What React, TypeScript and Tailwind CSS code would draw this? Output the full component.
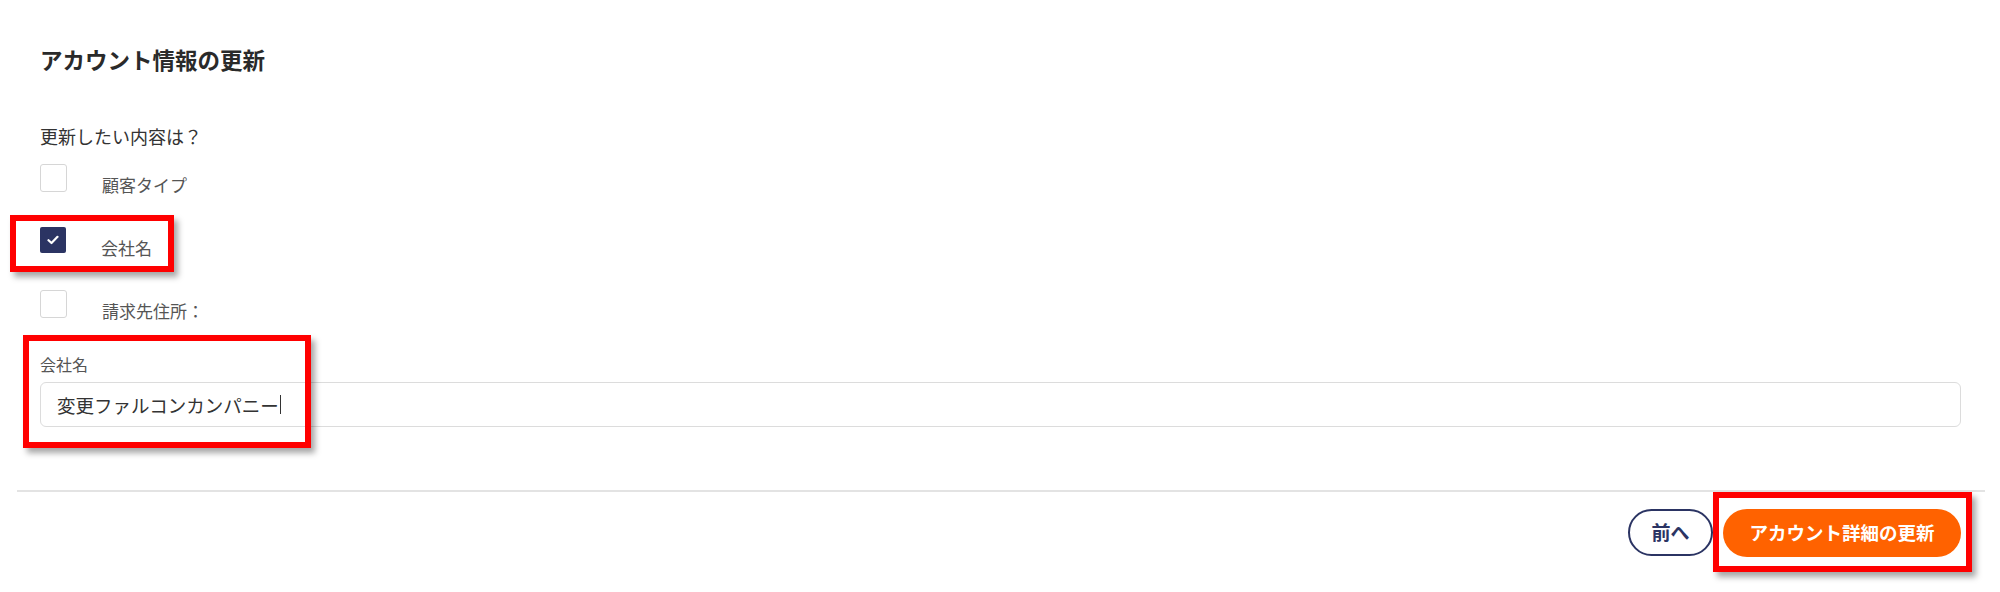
import React from 'react';

const options = [
  { label: '顧客タイプ', checked: false },
  { label: '会社名', checked: true },
  { label: '請求先住所：', checked: false },
];

// 赤枠の注釈（スクリーンショット上のマーキング）
const Marker = ({ className }: { className: string }) => (
  <div
    className={`absolute border-[6px] border-[#ff0000] shadow-[4px_5px_6px_rgba(0,0,0,0.35)] pointer-events-none ${className}`}
  />
);

const Checkbox = ({ checked }: { checked: boolean }) =>
  checked ? (
    <div className="w-[26px] h-[26px] rounded-[2px] bg-[#2b3463] flex items-center justify-center">
      <svg width="12" height="10" viewBox="0 0 12 10" fill="none">
        <path d="M1.5 5.2 4.5 8 10.5 1.8" stroke="white" strokeWidth="2.2" strokeLinecap="round" strokeLinejoin="round" />
      </svg>
    </div>
  ) : (
    <div className="w-[27px] h-[28px] rounded-[3px] border border-[#d6d6d6] bg-white" />
  );

const App: React.FC = () => {
  return (
    <div className="relative w-[2000px] h-[592px] bg-white overflow-hidden font-['Noto_Sans_CJK_JP','Noto_Sans',sans-serif] text-[#333]">
      <div className="px-[40px] pt-[44px]">
        <h1 className="text-[22.5px] leading-[30px] font-bold text-[#2a2a2a]">アカウント情報の更新</h1>

        <p className="mt-[50px] text-[18px] leading-[24px] text-[#333]">更新したい内容は？</p>

        <div className="mt-[16px] flex flex-col gap-[36px]">
          {options.map((o) => (
            <div key={o.label} className="flex items-start h-[27px]">
              <Checkbox checked={o.checked} />
              <span className="ml-[35px] mt-[9px] text-[17px] leading-[24px] text-[#555]">{o.label}</span>
            </div>
          ))}
        </div>

        <label className="block mt-[36px] text-[16px] leading-[22px] text-[#555]">会社名</label>
        <div className="mt-[7px] h-[45px] w-[1921px] border border-[#dcdcdc] rounded-[6px] flex items-center pl-[16px]">
          <span className="text-[18.5px] leading-[26px] text-[#333]">変更ファルコンカンパニー</span>
          <span className="ml-[1px] w-[1px] h-[19px] bg-[#333]" />
        </div>
      </div>

      <div className="ml-[17px] mt-[63px] w-[1968px] h-[2px] bg-[#e3e3e3]" />

      <div className="flex justify-end gap-[10px] pr-[39px] mt-[17px]">
        <button className="w-[85px] h-[47px] rounded-full border-2 border-[#2b3463] text-[#2b3463] text-[19px] font-bold bg-white">
          前へ
        </button>
        <button className="w-[238px] h-[48px] rounded-full bg-[#ff6200] text-white text-[18.5px] font-bold">
          アカウント詳細の更新
        </button>
      </div>

      <Marker className="left-[10px] top-[215px] w-[164px] h-[57px]" />
      <Marker className="left-[23px] top-[335px] w-[288px] h-[113px]" />
      <Marker className="left-[1713px] top-[492px] w-[259px] h-[80px]" />
    </div>
  );
};

export default App;
